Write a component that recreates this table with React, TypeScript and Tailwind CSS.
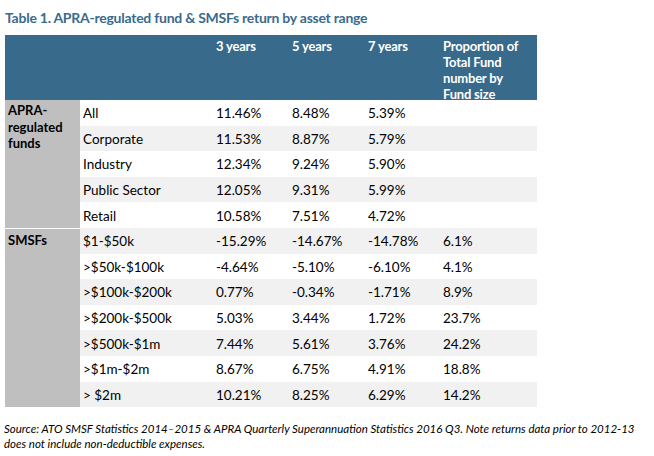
import React from "react";

const apra = [
  ["All", "11.46%", "8.48%", "5.39%", ""],
  ["Corporate", "11.53%", "8.87%", "5.79%", ""],
  ["Industry", "12.34%", "9.24%", "5.90%", ""],
  ["Public Sector", "12.05%", "9.31%", "5.99%", ""],
  ["Retail", "10.58%", "7.51%", "4.72%", ""],
];
const smsf = [
  ["$1-$50k", "-15.29%", "-14.67%", "-14.78%", "6.1%"],
  [">$50k-$100k", "-4.64%", "-5.10%", "-6.10%", "4.1%"],
  [">$100k-$200k", "0.77%", "-0.34%", "-1.71%", "8.9%"],
  [">$200k-$500k", "5.03%", "3.44%", "1.72%", "23.7%"],
  [">$500k-$1m", "7.44%", "5.61%", "3.76%", "24.2%"],
  [">$1m-$2m", "8.67%", "6.75%", "4.91%", "18.8%"],
  ["> $2m", "10.21%", "8.25%", "6.29%", "14.2%"],
];

function Row({ r, grey }: { r: string[]; grey: boolean }) {
  return (
    <div className={`flex h-[25.6px] items-center pt-[1px] ${grey ? "bg-[#f1f1f1]" : "bg-white"}`}>
      <div className="w-[133px] pl-[3px]">{r[0]}</div>
      <div className="w-[76px] pl-[3px]">{r[1]}</div>
      <div className="w-[76px] pl-[3px]">{r[2]}</div>
      <div className="w-[75px] pl-[3px]">{r[3]}</div>
      <div className="w-[97px] pl-[3px]">{r[4]}</div>
    </div>
  );
}

export default function App() {
  return (
    <div className="w-[654px] h-[456px] bg-white text-black" style={{ fontFamily: "Lato, 'Noto Sans', sans-serif" }}>
      <div className="pl-[5px] pt-[9px] h-[35px] text-[14px] tracking-[-0.25px] font-bold text-[#3a6b8e] leading-[18px] whitespace-nowrap">
        Table 1. APRA-regulated fund &amp; SMSFs return by asset range
      </div>
      <div className="ml-[5px] w-[532px] text-[13.5px] leading-[16px]">
        <div className="flex h-[65px] bg-[#386a8b] text-white font-bold pt-[3px] text-[13px] tracking-[-0.2px]">
          <div className="w-[75px]" />
          <div className="w-[133px]" />
          <div className="w-[76px] pl-[3px]">3 years</div>
          <div className="w-[76px] pl-[3px]">5 years</div>
          <div className="w-[75px] pl-[3px]">7 years</div>
          <div className="w-[97px] pl-[3px] pr-[10px]">Proportion of Total Fund number by Fund size</div>
        </div>
        <div className="flex">
          <div className="w-[75px] bg-[#bfbfbf] font-bold pl-[3px] pt-[2px] leading-[16.5px] text-[13px]">
            APRA-
            <br />
            regulated
            <br />
            funds
          </div>
          <div className="flex-1">
            {apra.map((r, i) => (
              <Row key={i} r={r} grey={i % 2 === 1} />
            ))}
          </div>
        </div>
        <div className="flex">
          <div className="w-[75px] bg-[#bfbfbf] border-t border-white font-bold pl-[3px] pt-[3px] text-[13px]">SMSFs</div>
          <div className="flex-1">
            {smsf.map((r, i) => (
              <Row key={i} r={r} grey={i % 2 === 0} />
            ))}
          </div>
        </div>
      </div>
      <div className="pl-[4px] pt-[14px] italic text-[11.5px] leading-[15px] whitespace-nowrap">
        Source: ATO SMSF Statistics 2014–2015 &amp; APRA Quarterly Superannuation Statistics 2016 Q3. Note returns data prior to 2012-13
        <br />
        does not include non-deductible expenses.
      </div>
    </div>
  );
}
